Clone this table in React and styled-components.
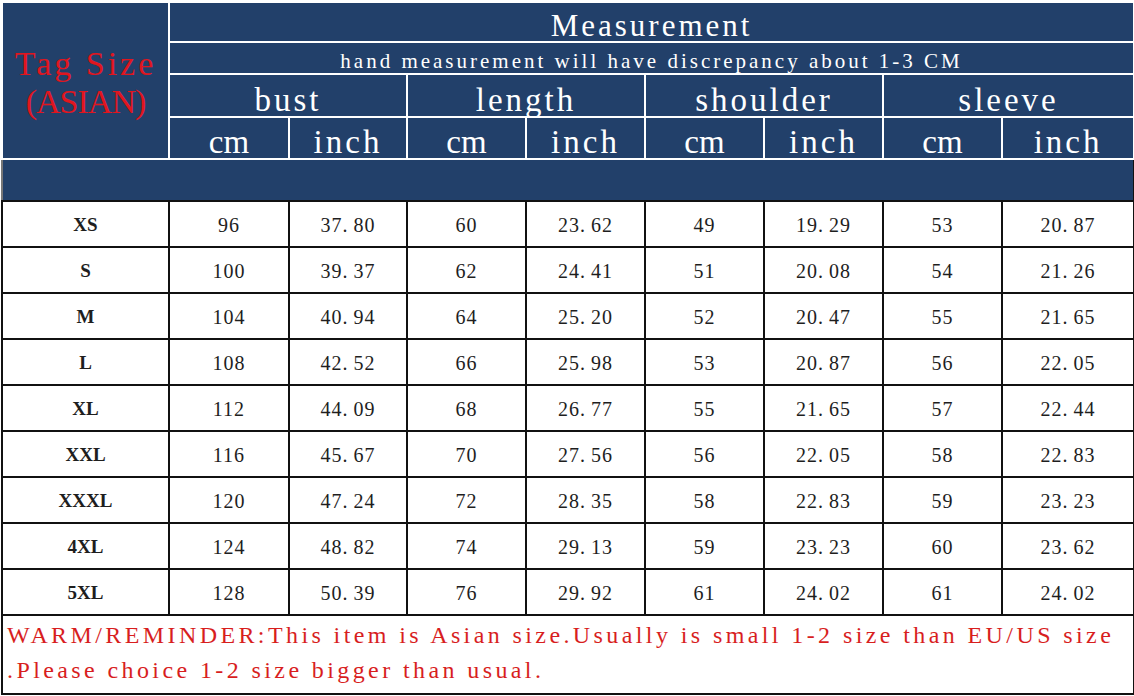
import styled, { createGlobalStyle } from 'styled-components';

const GlobalStyle = createGlobalStyle`
  html, body {
    margin: 0;
    padding: 0;
    background: #fff;
  }
  body {
    font-family: 'Liberation Serif', 'Times New Roman', serif;
  }
`;

const NAVY = '#22406a';

const Sheet = styled.table`
  border-collapse: collapse;
  table-layout: fixed;
  width: 1132px;
  margin: 1px 0 0 1px;
  border: 2px solid #111;
  border-left-color: #777;
  font-family: 'Liberation Serif', serif;
`;

const HeadCell = styled.th`
  background: ${NAVY};
  color: #fff;
  font-weight: normal;
  border: 2px solid #fff;
  padding: 0 0 ${(p) => p.$pb || 0}px;
  height: ${(p) => p.$h}px;
  font-size: ${(p) => p.$size || 33}px;
  letter-spacing: ${(p) => p.$ls ?? 2}px;
  line-height: ${(p) => p.$lh || 1};
  vertical-align: bottom;
  white-space: nowrap;
  overflow: hidden;
`;

const TagCell = styled(HeadCell)`
  color: #e0161f;
  font-size: 34px;
  line-height: 38px;
  vertical-align: middle;
  padding: 4px 0 0;
`;

const TagLine = styled.span`
  display: block;
  letter-spacing: ${(p) => p.$ls}px;
`;

const Spacer = styled.td`
  background: ${NAVY};
  height: 40px;
  border-top: 2px solid #111;
  border-bottom: 2px solid #111;
  padding: 0;
`;

const Cell = styled.td`
  border: 2px solid #111;
  height: 42px;
  padding: 2px 0 0;
  text-align: center;
  font-size: ${(p) => (p.$bold ? 19 : 20)}px;
  letter-spacing: ${(p) => (p.$bold ? 0 : 1)}px;
  color: #1e1e1e;
  font-weight: ${(p) => (p.$bold ? 'bold' : 'normal')};
`;

const Dot = styled.span`
  margin-right: 5px;
`;

const Note = styled.td`
  border: 2px solid #111;
  padding: 2px 0 0 4px;
  color: #d81e1e;
  font-size: 24px;
  letter-spacing: 3.4px;
  line-height: 35px;
  white-space: nowrap;
  height: 75px;
  vertical-align: top;
`;

const widths = [167, 120, 118, 119, 119, 119, 119, 119, 132];
const groups = ['bust', 'length', 'shoulder', 'sleeve'];

const rows = [
  ['XS', '96', '37.80', '60', '23.62', '49', '19.29', '53', '20.87'],
  ['S', '100', '39.37', '62', '24.41', '51', '20.08', '54', '21.26'],
  ['M', '104', '40.94', '64', '25.20', '52', '20.47', '55', '21.65'],
  ['L', '108', '42.52', '66', '25.98', '53', '20.87', '56', '22.05'],
  ['XL', '112', '44.09', '68', '26.77', '55', '21.65', '57', '22.44'],
  ['XXL', '116', '45.67', '70', '27.56', '56', '22.05', '58', '22.83'],
  ['XXXL', '120', '47.24', '72', '28.35', '58', '22.83', '59', '23.23'],
  ['4XL', '124', '48.82', '74', '29.13', '59', '23.23', '60', '23.62'],
  ['5XL', '128', '50.39', '76', '29.92', '61', '24.02', '61', '24.02'],
];

function Value({ v }) {
  const [whole, frac] = v.split('.');
  if (frac === undefined) return v;
  return (
    <>
      {whole}
      <Dot>.</Dot>
      {frac}
    </>
  );
}

export default function App() {
  return (
    <>
      <GlobalStyle />
      <Sheet>
        <colgroup>
          {widths.map((w, i) => (
            <col key={i} style={{ width: w }} />
          ))}
        </colgroup>
        <thead>
          <tr>
            <TagCell rowSpan={4}>
              <TagLine $ls={3}>Tag Size</TagLine>
              <TagLine $ls={-1}>(ASIAN)</TagLine>
            </TagCell>
            <HeadCell colSpan={8} $h={38} $size={31} $ls={3} $pb={0}>
              Measurement
            </HeadCell>
          </tr>
          <tr>
            <HeadCell colSpan={8} $h={29} $size={21} $ls={3} $pb={1}>
              hand measurement will have discrepancy about 1-3 CM
            </HeadCell>
          </tr>
          <tr>
            {groups.map((g) => (
              <HeadCell key={g} colSpan={2} $h={41} $pb={0} $lh={0.94} $ls={3}>
                {g}
              </HeadCell>
            ))}
          </tr>
          <tr>
            {groups.map((g) => [
              <HeadCell key={g + 'cm'} $h={40} $pb={0} $lh={0.94} $ls={0}>
                cm
              </HeadCell>,
              <HeadCell key={g + 'in'} $h={40} $pb={0} $lh={0.94} $ls={3}>
                inch
              </HeadCell>,
            ])}
          </tr>
          <tr>
            <Spacer colSpan={9} />
          </tr>
        </thead>
        <tbody>
          {rows.map((r) => (
            <tr key={r[0]}>
              {r.map((v, i) => (
                <Cell key={i} $bold={i === 0}>
                  {i === 0 ? v : <Value v={v} />}
                </Cell>
              ))}
            </tr>
          ))}
          <tr>
            <Note colSpan={9}>
              WARM/REMINDER:This item is Asian size.Usually is small 1-2 size than EU/US size
              <br />
              .Please choice 1-2 size bigger than usual.
            </Note>
          </tr>
        </tbody>
      </Sheet>
    </>
  );
}
